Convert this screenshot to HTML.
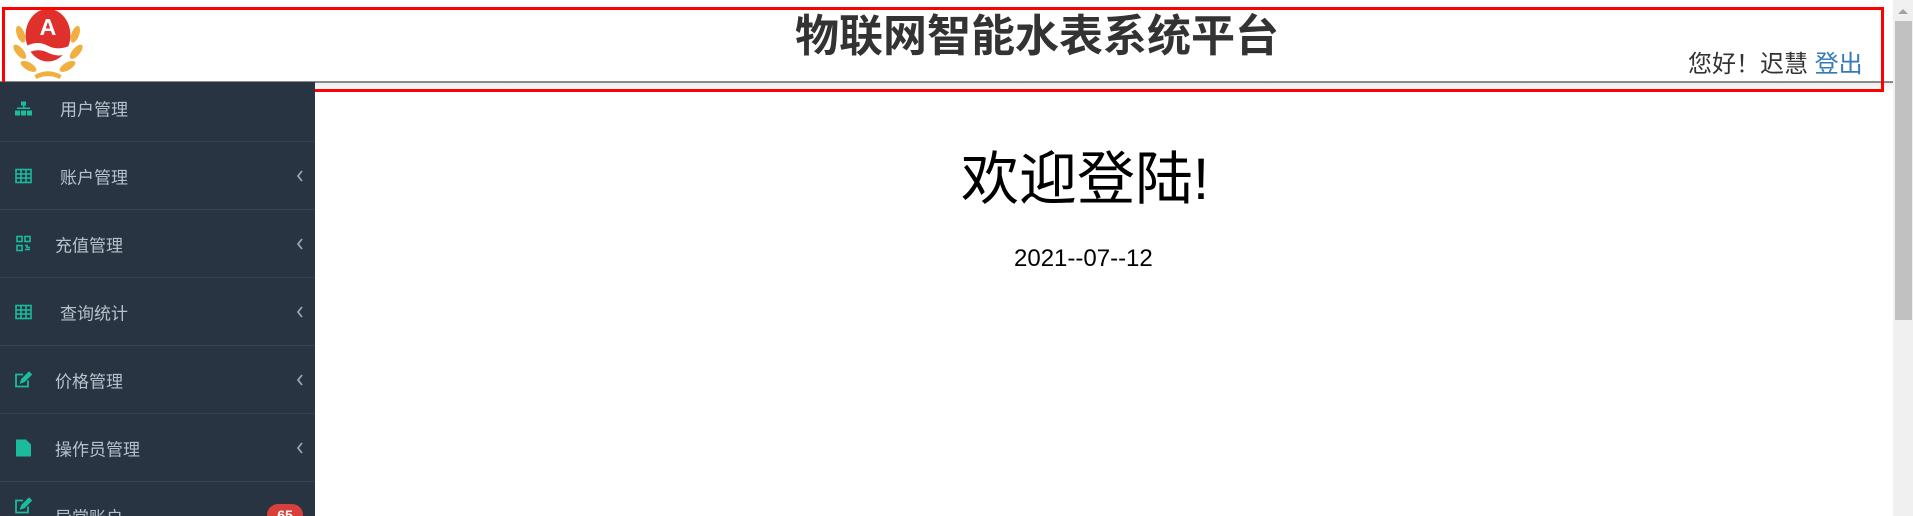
<!DOCTYPE html>
<html><head><meta charset="utf-8"><style>
*{margin:0;padding:0;box-sizing:border-box}
html,body{width:1913px;height:516px;overflow:hidden;background:#fff}
body{position:relative;font-family:"Liberation Sans","Noto Sans CJK SC",sans-serif}
.abs{position:absolute}
#side{left:0;top:82px;width:315px;height:434px;background:#283442;overflow:hidden}
.row{position:absolute;left:0;width:315px;height:68px;border-bottom:1px solid #34414f}
.row .t{position:absolute;top:50%;transform:translateY(-50%);font-size:17px;color:#b6c2cb;white-space:nowrap}
.row .ic{position:absolute;left:15px;top:50%;transform:translateY(-50%);width:17px;height:17px}
.row .ar{position:absolute;left:296px;top:50%;transform:translateY(-50%);width:8px;height:12px}
</style></head><body>
<div class="abs" style="left:0;top:81px;width:1893px;height:2px;background:#8a8a8a"></div>
<div class="abs" style="left:0;top:83px;width:1893px;height:8px;background:linear-gradient(#eee,#fff)"></div>
<svg class="abs" style="left:10px;top:5px" width="76" height="76" viewBox="0 0 76 78">
<g fill="#f0b040">
<ellipse cx="10" cy="30" rx="4" ry="9" transform="rotate(-20 10 30)"/>
<ellipse cx="9" cy="48" rx="4" ry="9" transform="rotate(-40 9 48)"/>
<ellipse cx="18" cy="63" rx="4" ry="9" transform="rotate(-60 18 63)"/>
<ellipse cx="66" cy="30" rx="4" ry="9" transform="rotate(20 66 30)"/>
<ellipse cx="67" cy="48" rx="4" ry="9" transform="rotate(40 67 48)"/>
<ellipse cx="58" cy="63" rx="4" ry="9" transform="rotate(60 58 63)"/>
<path d="M24 72 Q38 64 52 72 L50 76 Q38 70 26 76Z"/>
</g>
<ellipse cx="38" cy="31" rx="23" ry="27" fill="#e0302c"/>
<path d="M16 42 Q28 36 38 42 Q48 47 60 42 L58 50 Q48 54 38 49 Q28 44 18 49Z" fill="#fff"/>
<text x="38" y="31" text-anchor="middle" font-family="Liberation Sans" font-weight="bold" font-size="24" fill="#fff">A</text>
</svg>
<div class="abs" style="left:795px;top:8px;font-size:44px;font-weight:bold;color:#333;white-space:nowrap;line-height:58px">物联网智能水表系统平台</div>
<div class="abs" style="left:1688px;top:48px;font-size:24px;color:#333;white-space:nowrap;line-height:34px">您好！迟慧 <span style="color:#337ab7">登出</span></div>
<div class="abs" style="left:2px;top:7px;width:1882px;height:85px;border:3px solid #f00"></div>
<div class="abs" style="left:1893px;top:0;width:20px;height:516px;background:#f0f0f0"></div>
<div class="abs" style="left:1895px;top:21px;width:17px;height:299px;background:#c1c1c1"></div>
<div class="abs" style="left:1898px;top:9px;width:0;height:0;border-left:5px solid transparent;border-right:5px solid transparent;border-bottom:5px solid #a3a3a3"></div>
<div id="side" class="abs">
<div class="row" style="top:-8px"><svg class="ic" viewBox="0 0 17 17" fill="#1abc9c"><rect x="6" y="2" width="5" height="4"/><rect x="2" y="8" width="13" height="1.5"/><rect x="0" y="11" width="5" height="5"/><rect x="6" y="11" width="5" height="5"/><rect x="12" y="11" width="5" height="5"/><rect x="8" y="5" width="1.5" height="4"/></svg><span class="t" style="left:60px">用户管理</span></div>
<div class="row" style="top:60px"><svg class="ic" viewBox="0 0 17 17" fill="none" stroke="#1abc9c" stroke-width="1.6"><rect x="1" y="2" width="15" height="13"/><path d="M1 6.5H16M1 10.5H16M6 2V15M11 2V15"/></svg><span class="t" style="left:60px">账户管理</span><svg class="ar" viewBox="0 0 8 12"><path d="M6 1L2 6l4 5" fill="none" stroke="#9aa6b0" stroke-width="1.8"/></svg></div>
<div class="row" style="top:128px"><svg class="ic" viewBox="0 0 17 17" fill="none" stroke="#1abc9c" stroke-width="1.6"><rect x="2" y="1" width="5" height="5"/><rect x="10" y="1" width="5" height="5"/><rect x="2" y="10" width="5" height="5"/><path d="M10 10h2v2h3M10 14h5"/></svg><span class="t" style="left:55px">充值管理</span><svg class="ar" viewBox="0 0 8 12"><path d="M6 1L2 6l4 5" fill="none" stroke="#9aa6b0" stroke-width="1.8"/></svg></div>
<div class="row" style="top:196px"><svg class="ic" viewBox="0 0 17 17" fill="none" stroke="#1abc9c" stroke-width="1.6"><rect x="1" y="2" width="15" height="13"/><path d="M1 6.5H16M1 10.5H16M6 2V15M11 2V15"/></svg><span class="t" style="left:60px">查询统计</span><svg class="ar" viewBox="0 0 8 12"><path d="M6 1L2 6l4 5" fill="none" stroke="#9aa6b0" stroke-width="1.8"/></svg></div>
<div class="row" style="top:264px"><svg class="ic" viewBox="0 0 17 17" fill="none" stroke="#1abc9c" stroke-width="1.8"><path d="M13 9v6H1V3h7"/><path d="M6 11l1-3 7-7 2 2-7 7z" fill="#1abc9c"/></svg><span class="t" style="left:55px">价格管理</span><svg class="ar" viewBox="0 0 8 12"><path d="M6 1L2 6l4 5" fill="none" stroke="#9aa6b0" stroke-width="1.8"/></svg></div>
<div class="row" style="top:332px"><svg class="ic" viewBox="0 0 17 17" fill="#1abc9c"><path d="M1 0H11L16 5V17H1Z"/></svg><span class="t" style="left:55px">操作员管理</span><svg class="ar" viewBox="0 0 8 12"><path d="M6 1L2 6l4 5" fill="none" stroke="#9aa6b0" stroke-width="1.8"/></svg></div>
<div class="row" style="top:400px;height:34px;border:none"><svg class="ic" style="top:24px" viewBox="0 0 17 17" fill="none" stroke="#1abc9c" stroke-width="1.8"><path d="M13 9v6H1V3h7"/><path d="M6 11l1-3 7-7 2 2-7 7z" fill="#1abc9c"/></svg><span class="t" style="left:55px;top:34px">异常账户</span><span style="position:absolute;left:267px;top:22px;width:36px;height:22px;border-radius:11px;background:#d9403a;color:#fff;font-size:14px;font-weight:bold;text-align:center;line-height:22px">65</span></div>
</div>
<div class="abs" style="left:961px;top:144px;font-size:58px;color:#000;white-space:nowrap;line-height:72px">欢迎登陆!</div>
<div class="abs" style="left:1014px;top:244px;font-size:24px;color:#000;white-space:nowrap;line-height:30px">2021--07--12</div>
</body></html>
